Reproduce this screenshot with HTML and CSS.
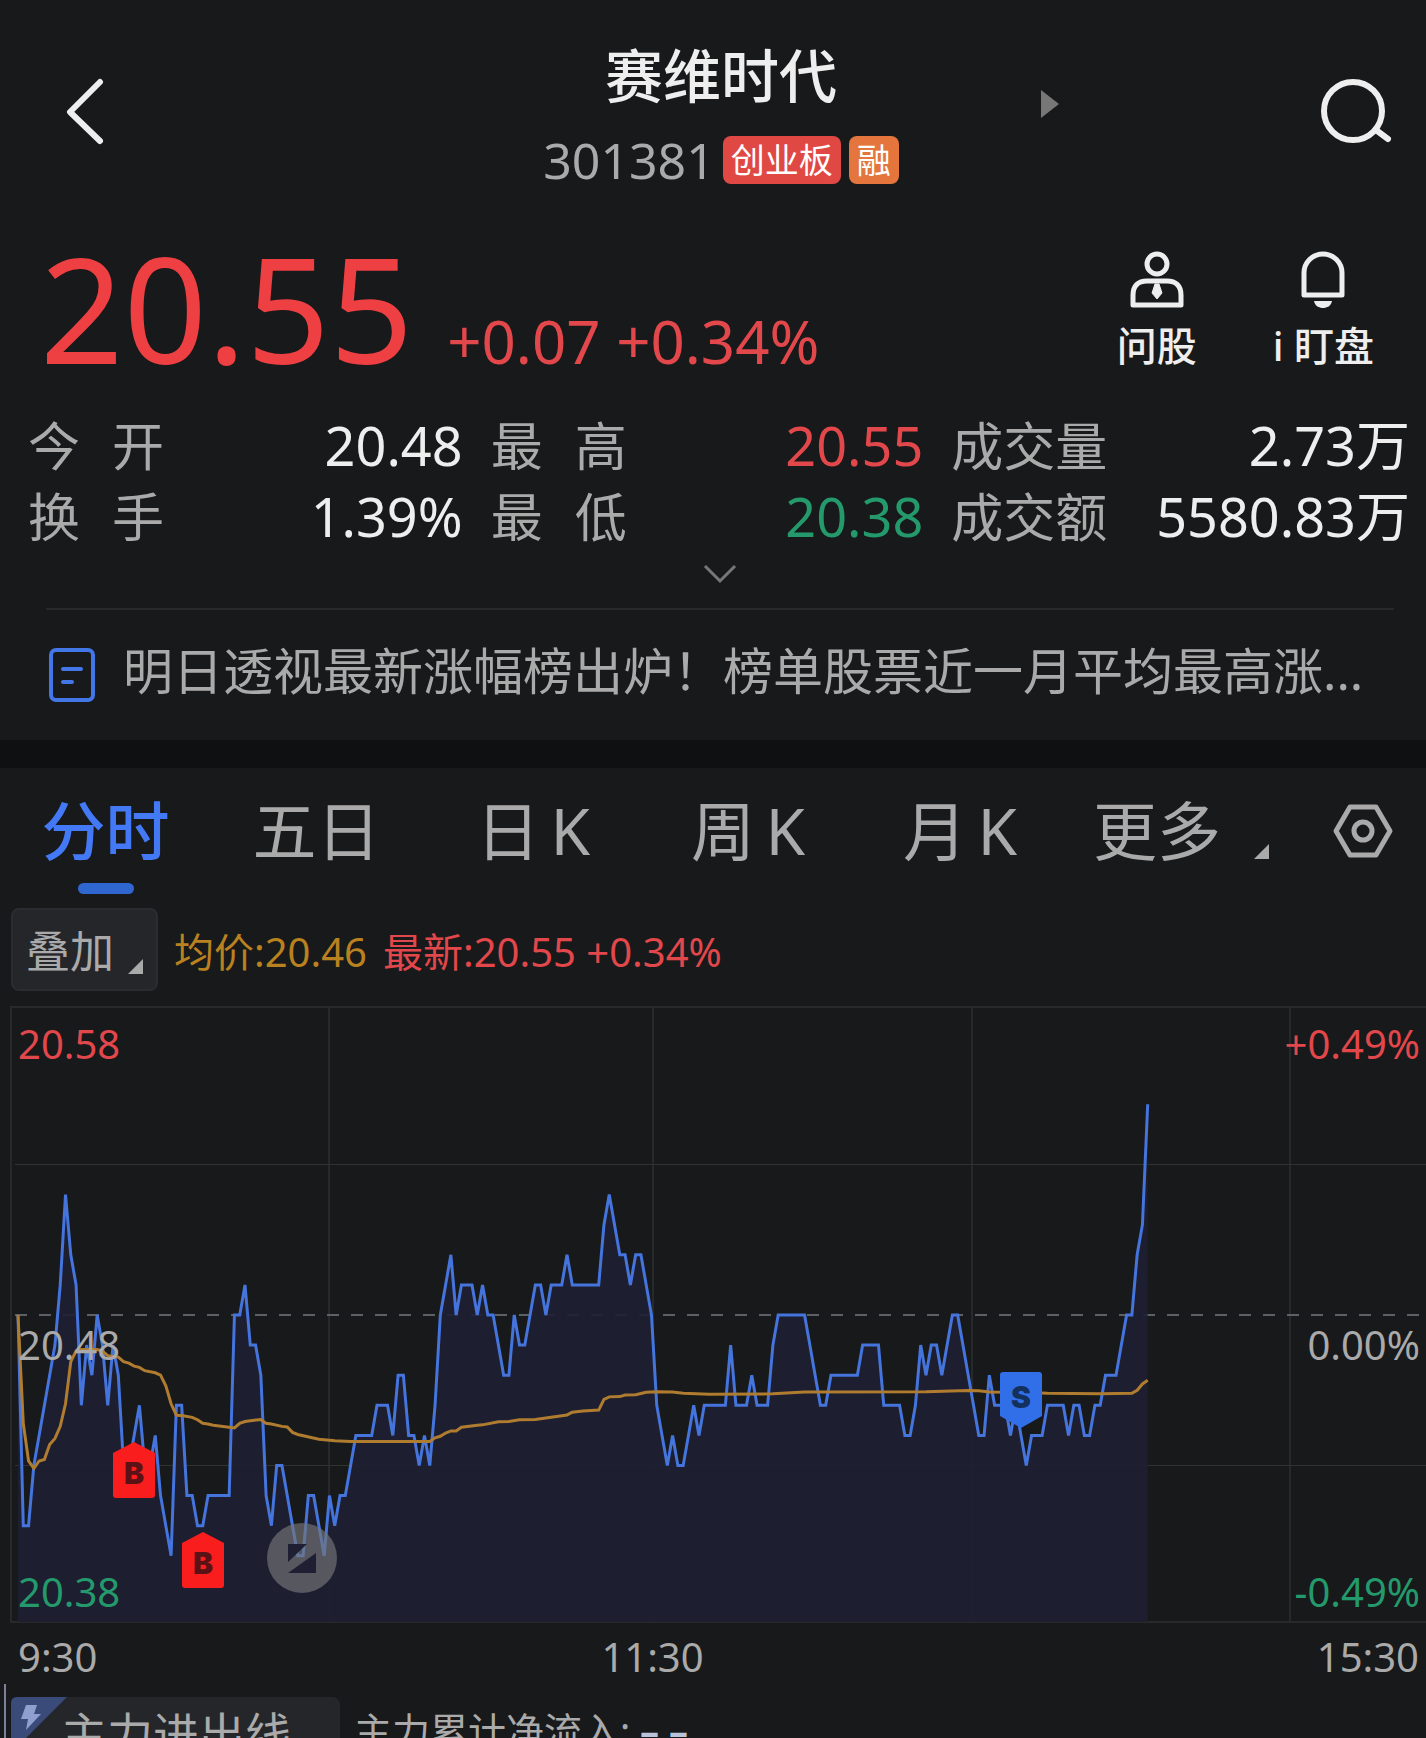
FILE: index.html
```html
<!DOCTYPE html>
<html lang="zh-CN">
<head>
<meta charset="utf-8">
<meta name="viewport" content="width=device-width, initial-scale=1">
<title>赛维时代 301381</title>
<link rel="stylesheet" href="styles.css">
</head>
<body>
<main class="app">
  <header class="header">
    <button class="icon-btn back" type="button" aria-label="返回">
      <svg width="40" height="70" viewBox="0 0 40 70" fill="none" stroke="#eee" stroke-width="6" stroke-linecap="round" stroke-linejoin="round"><path d="M34 5 4 35l30 29"/></svg>
    </button>
    <div class="stock">
      <h1 class="stock-name">赛维时代</h1>
      <div class="stock-meta">
        <span class="stock-code">301381</span>
        <span class="tag tag-red">创业板</span>
        <span class="tag tag-orange">融</span>
      </div>
    </div>
    <div class="header-right">
      <button class="icon-btn next" type="button" aria-label="下一只">
        <svg width="18" height="28" viewBox="0 0 18 28" fill="#777"><path d="M0 0 18 14 0 28z"/></svg>
      </button>
      <button class="icon-btn search" type="button" aria-label="搜索">
        <svg width="72" height="66" viewBox="0 0 72 66" fill="none" stroke="#eee" stroke-width="6" stroke-linecap="round"><circle cx="33" cy="32" r="29"/><path d="m56 51 12 9"/></svg>
      </button>
    </div>
  </header>

  <section class="quote">
    <div class="price">20.55</div>
    <div class="change">+0.07 +0.34%</div>
    <div class="actions">
      <button class="action" type="button">
        <svg width="54" height="58" viewBox="0 0 54 58" fill="none" stroke="#eee" stroke-width="5" stroke-linejoin="round"><circle cx="27" cy="13" r="10"/><path d="M3 54V44c0-9 5-14 14-14h20c9 0 14 5 14 14v10z"/><path d="M25 33h4l3 9-5 6-5-6z" fill="#eee" stroke-width="1"/></svg>
        <span>问股</span>
      </button>
      <button class="action" type="button">
        <svg width="54" height="58" viewBox="0 0 54 58" fill="none" stroke="#eee" stroke-width="5" stroke-linejoin="round"><path d="M8 44V22a19 19 0 0 1 38 0v22z"/><path d="M18 50h18c-1 5-5 7-9 7s-8-2-9-7z" fill="#eee" stroke="none"/></svg>
        <span>i 盯盘</span>
      </button>
    </div>
  </section>

  <dl class="stats">
    <div class="stat"><dt>今 开</dt><dd>20.48</dd></div>
    <div class="stat"><dt>最 高</dt><dd class="up">20.55</dd></div>
    <div class="stat"><dt>成交量</dt><dd>2.73万</dd></div>
    <div class="stat"><dt>换 手</dt><dd>1.39%</dd></div>
    <div class="stat"><dt>最 低</dt><dd class="down">20.38</dd></div>
    <div class="stat"><dt>成交额</dt><dd>5580.83万</dd></div>
  </dl>
  <button class="icon-btn expand" type="button" aria-label="展开">
    <svg width="34" height="20" viewBox="0 0 34 20" fill="none" stroke="#777" stroke-width="3"><path d="m2 2 15 15L32 2"/></svg>
  </button>

  <a class="news" href="#news">
    <svg class="news-icon" width="46" height="54" viewBox="0 0 46 54" fill="none" stroke="#4377e8" stroke-width="4" stroke-linecap="round"><rect x="2" y="2" width="42" height="50" rx="5"/><path d="M14 21h18M14 34h9"/></svg>
    <span class="news-text">明日透视最新涨幅榜出炉！榜单股票近一月平均最高涨...</span>
  </a>

  <nav class="tabs">
    <button class="tab active" type="button">分时</button>
    <button class="tab" type="button">五日</button>
    <button class="tab" type="button">日&#8201;K</button>
    <button class="tab" type="button">周&#8201;K</button>
    <button class="tab" type="button">月&#8201;K</button>
    <button class="tab more" type="button">更多<svg class="corner" width="16" height="16" viewBox="0 0 16 16"><path d="M15 0v15H0z"/></svg></button>
    <button class="tab settings" type="button" aria-label="设置">
      <svg width="60" height="54" viewBox="0 0 60 54" fill="none" stroke="#aaa" stroke-width="5" stroke-linejoin="round"><path d="M17 3h26l14 24-14 24H17L3 27z"/><circle cx="30" cy="27" r="9"/></svg>
    </button>
  </nav>

  <div class="legend">
    <button class="overlay-btn" type="button">叠加<svg class="corner" width="16" height="16" viewBox="0 0 16 16"><path d="M15 0v15H0z"/></svg></button>
    <span class="avg">均价:20.46</span>
    <span class="last">最新:20.55 +0.34%</span>
  </div>

  <section class="chart">
    <svg class="plot" viewBox="0 0 1416 618" preserveAspectRatio="none">
      <g class="frame"><path d="M1416 1H1v615h1415M319 1v615M643 1v615M962 1v615M1280 1v615"/></g>
      <path class="grid-line" d="M5 158.500h1411M5 459.500h1411"/>
      <path class="zero-line" d="M5 309h1411"/>
      <!-- x: minutes since 9:30, y: ticks from the previous close -->
      <g transform="translate(8 309) scale(5.279 -30.1)">
        <polygon class="area" id="area"/>
        <polyline class="price-line" id="price-line" points="0,0 1,-7 2,-7 3,-5 4,-4 5,-3 6,-2 7,-1 8,1 9,4 10,2 11,1 12,-3 13,-1 14,-2 15,0 16,-1 17,-3 18,-1 19,-2 20,-5 21,-5 22,-4 23,-3 24,-5 25,-5 26,-4 27,-6 28,-7 29,-8 30,-3 31,-3 32,-6 33,-6 34,-7 35,-7 36,-6 40,-6 41,0 42,0 43,1 44,-1 45,-1 46,-2 47,-6 48,-7 49,-5 50,-5 51,-6 52,-7 53,-8 54,-8 55,-6 56,-6 57,-7 58,-8 59,-6 60,-7 61,-6 62,-6 63,-5 64,-4 67,-4 68,-3 70,-3 71,-4 72,-2 73,-2 74,-4 75,-4 76,-5 77,-4 78,-5 79,-3 80,0 81,1 82,2 83,0 84,1 86,1 87,0 88,1 89,0 90,0 91,-1 92,-2 93,-2 94,0 95,-1 96,-1 97,0 98,1 99,1 100,0 101,1 103,1 104,2 105,1 110,1 111,3 112,4 113,3 114,2 115,2 116,1 117,2 118,2 119,1 120,0 121,-3 122,-4 123,-5 124,-4 125,-5 126,-5 127,-4 128,-3 129,-4 130,-3 134,-3 135,-1 136,-3 138,-3 139,-2 140,-3 142,-3 143,-1 144,0 149,0 150,-1 151,-2 152,-3 153,-3 154,-2 159,-2 160,-1 163,-1 164,-3 167,-3 168,-4 169,-4 170,-3 171,-1 172,-2 173,-1 174,-1 175,-2 176,-1 177,0 178,0 179,-1 180,-2 181,-3 182,-4 183,-4 184,-2 185,-3 187,-3 188,-4 189,-3 190,-4 191,-5 192,-4 194,-4 195,-3 198,-3 199,-4 200,-3 201,-3 202,-4 203,-4 204,-3 205,-3 206,-2 208,-2 209,-1 210,0 211,0 212,2 213,3 214,7"/>
        <polyline class="avg-line" points="0,0 1,-3.6 2,-4.85 3,-5.1 4,-4.85 5,-4.8 6,-4.3 7,-4.1 8,-3.7 9,-2.95 10,-1.55 11,-1.2 12,-1.15 15,-1.15 16,-1.2 17,-1.35 19,-1.4 20,-1.55 21,-1.6 22,-1.7 23,-1.74 24,-1.85 26,-1.92 27,-2 28,-2.35 29,-2.95 30,-3.33 31,-3.34 33,-3.4 34,-3.48 35,-3.6 36,-3.62 37,-3.66 41,-3.75 42,-3.6 43,-3.54 46,-3.47 47,-3.6 48,-3.62 50,-3.7 51,-3.72 52,-3.9 53,-3.97 57,-4.13 60,-4.18 63,-4.2 78,-4.2 79,-4.08 80,-4.03 81,-3.92 82,-3.85 83,-3.85 84,-3.73 87,-3.66 88,-3.65 91,-3.55 93,-3.54 95,-3.48 98,-3.47 101,-3.4 104,-3.32 105,-3.23 107,-3.19 110,-3.16 111,-2.8 112,-2.72 114,-2.71 115,-2.66 117,-2.65 119,-2.57 121,-2.55 124,-2.56 126,-2.6 131,-2.63 143,-2.62 149,-2.56 172,-2.55 180,-2.51 182,-2.52 184,-2.56 190,-2.57 195,-2.6 205,-2.62 211,-2.6 212,-2.5 213,-2.29 214,-2.17"/>
      </g>
      <g class="markers">
        <path fill="#f91d1d" d="M103 447l21-11 21 11v42q0 3-3 3h-36q-3 0-3-3z"/><text x="124" y="478" fill="#5a1216">B</text>
        <path fill="#f91d1d" d="M172 537l21-11 21 11v42q0 3-3 3h-36q-3 0-3-3z"/><text x="193" y="568" fill="#5a1216">B</text>
        <path fill="#316fe8" d="M990 369q0-3 3-3h36q3 0 3 3v41l-21 12-21-12z"/><text x="1011" y="402" fill="#14305f">S</text>
      </g>
      <g class="zoomer"><circle cx="292" cy="552" r="35"/><path d="M278 538h19l-19 18zM306 567h-28l28-20z"/></g>
    </svg>
    <span class="label top up">20.58</span>
    <span class="label mid">20.48</span>
    <span class="label bottom down">20.38</span>
    <span class="label right top up">+0.49%</span>
    <span class="label right mid">0.00%</span>
    <span class="label right bottom down">-0.49%</span>
  </section>
  <div class="times"><span>9:30</span><span>11:30</span><span>15:30</span></div>

  <section class="flow">
    <button class="flow-btn" type="button">
      <svg class="flow-badge" width="58" height="58" viewBox="0 0 58 58"><path fill="#3a4b79" d="M0 6q0-6 6-6h50L0 56z"/><path fill="#8fa0d0" d="M15 8h11l-3 9h7L15 33l2-11h-7z"/></svg>
      主力进出线
    </button>
    <span class="flow-text">主力累计净流入: <b>– –</b></span>
  </section>
</main>
<script>
  // Close the price line down to the bottom of the plot to get the shaded area.
  const line = document.getElementById("price-line").getAttribute("points");
  document.getElementById("area").setAttribute("points", "0,-10.2 " + line + " 214,-10.2");
</script>
</body>
</html>
```

FILE: styles.css
```css
* { box-sizing: border-box; }

body {
  margin: 0;
  background: #17191a;
  color: #aaa;
  font-family: "Noto Sans", "Noto Sans CJK SC", sans-serif;
}

button {
  border: 0;
  padding: 0;
  background: none;
  color: inherit;
  font: inherit;
}

svg { display: block; }

.app {
  display: flex;
  flex-direction: column;
  height: 100vh;
  overflow: hidden;
}

.app > * { flex-shrink: 0; }

.up { color: #e2474b; }
.down { color: #249a6c; }

/* Header */
.header {
  display: grid;
  grid-template-columns: 1fr auto 1fr;
  align-items: center;
  height: 224px;
  padding: 0 34px 0 50px;
}

.back {
  justify-self: start;
  padding-left: 16px;
}

.header-right {
  display: flex;
  justify-content: space-between;
  align-items: center;
  padding-left: 142px;
}

.next { padding-bottom: 16px; }

.stock {
  display: flex;
  flex-direction: column;
  align-items: center;
  padding-top: 12px;
}

.stock-name {
  margin: 0;
  color: #eee;
  font-size: 58px;
  font-weight: 500;
  line-height: 84px;
}

.stock-meta {
  display: flex;
  align-items: center;
  gap: 8px;
  height: 84px;
}

.stock-code { font-size: 50px; }

.tag {
  height: 48px;
  padding: 0 8px;
  border-radius: 8px;
  color: #fff;
  font-size: 34px;
  line-height: 48px;
}

.tag-red { background: #e04844; }
.tag-orange { background: #e4763d; }

/* Quote */
.quote {
  display: flex;
  align-items: baseline;
  height: 176px;
  padding: 0 52px 0 40px;
}

.price {
  color: #ee3f43;
  font-size: 146px;
  line-height: 168px;
}

.change {
  margin-left: 34px;
  color: #e2474b;
  font-size: 60px;
  line-height: 92px;
}

.actions {
  display: flex;
  align-self: flex-start;
  gap: 76px;
  margin-left: auto;
  padding-top: 27px;
}

.action {
  display: flex;
  flex-direction: column;
  align-items: center;
  gap: 8px;
  color: #eee;
  font-size: 40px;
  font-weight: 500;
  line-height: 58px;
}

/* Figures */
.stats {
  display: grid;
  grid-template-columns: 434fr 432fr 458fr;
  column-gap: 28px;
  margin: 0;
  padding: 10px 16px 0 28px;
}

.stat {
  display: flex;
  justify-content: space-between;
  height: 71px;
  font-size: 52px;
  line-height: 71px;
  white-space: nowrap;
}

.stat dt {
  min-width: 136px;
  text-align-last: justify;
}

.stat dd {
  margin: 0;
  font-size: 54px;
}

.stat dd:not(.up):not(.down) { color: #eee; }

.expand {
  align-self: center;
  padding: 12px 0 0 14px;
}

/* News */
.news {
  display: flex;
  align-items: center;
  gap: 28px;
  margin: 24px 32px 0 46px;
  padding: 0 0 0 3px;
  height: 132px;
  border-top: 2px solid #26282a;
  color: #aaa;
  text-decoration: none;
}

.news-icon { flex: none; }

.news-text {
  padding-bottom: 8px;
  font-size: 50px;
  line-height: 72px;
  white-space: nowrap;
}

/* Tabs */
.tabs {
  display: grid;
  grid-template-columns: 211fr 211fr 222fr 208fr 216fr 198fr 160fr;
  height: 140px;
  border-top: 28px solid #0f1011;
  box-sizing: content-box;
}

.tab {
  position: relative;
  display: flex;
  justify-content: center;
  align-items: center;
  padding-bottom: 22px;
  font-size: 64px;
  white-space: nowrap;
}

.tab.active {
  color: #4479f5;
  font-weight: 500;
}

.tab.active::after {
  content: "";
  position: absolute;
  bottom: 14px;
  width: 56px;
  height: 11px;
  border-radius: 6px;
  background: #3066d0;
}

.tab.more { padding-right: 20px; }

.tab.settings {
  justify-content: flex-end;
  padding: 0 33px 14px 0;
}

.corner { fill: #aaa; }

.more .corner {
  position: absolute;
  right: -4px;
  bottom: 48px;
}

/* Legend */
.legend {
  display: flex;
  align-items: center;
  height: 83px;
  padding-left: 11px;
  font-size: 40px;
}

.overlay-btn {
  display: flex;
  align-items: center;
  gap: 14px;
  height: 83px;
  margin-right: 16px;
  padding: 0 12px 2px 13px;
  border: 2px solid #2a2c2f;
  border-radius: 8px;
  background: #25262a;
  font-size: 44px;
}

.overlay-btn .corner {
  align-self: flex-end;
  margin-bottom: 12px;
}

.avg {
  margin-right: 16px;
  color: #b9811f;
}

.last { color: #e2474b; }

/* Chart */
.chart {
  position: relative;
  margin: 15px 0 0 10px;
}

.plot {
  width: 100%;
  height: 618px;
}

.plot path,
.plot polyline { vector-effect: non-scaling-stroke; }

.frame { fill: none; stroke: #27292b; stroke-width: 2; }
.grid-line { fill: none; stroke: #303332; }
.zero-line { stroke: #5c6067; stroke-width: 2; stroke-dasharray: 12 12; }
.area { fill: #1e1f33; fill-opacity: .9; }
.price-line { fill: none; stroke: #4474dc; stroke-width: 3; }
.avg-line { fill: none; stroke: #b07c30; stroke-width: 3; }

.markers {
  font: 900 30px Inter, sans-serif;
  text-anchor: middle;
}

.zoomer circle { fill: #77777a; fill-opacity: .65; }
.zoomer path { fill: #1e1f33; }

.label {
  position: absolute;
  left: 8px;
  font-size: 40px;
  line-height: 48px;
}

.label.right { right: 6px; left: auto; }
.label.top { top: 14px; }
.label.mid { top: 315px; }
.label.bottom { bottom: 8px; }

.times {
  display: grid;
  grid-template-columns: 1fr auto 1fr;
  padding: 7px 7px 1px 18px;
  font-size: 40px;
  line-height: 52px;
}

.times span:nth-child(2) { margin-right: 132px; }
.times span:last-child { text-align: right; }

/* Capital flow */
.flow {
  display: flex;
  gap: 14px;
  margin: 0 0 0 4px;
  padding: 13px 0 0 5px;
  border-left: 2px solid #7c8098;
}

.flow-btn {
  position: relative;
  width: 329px;
  height: 83px;
  padding: 0 0 16px 50px;
  border-radius: 8px;
  background: #25262a;
  font-size: 46px;
  text-align: left;
}

.flow-badge {
  position: absolute;
  top: 0;
  left: 0;
}

.flow-text {
  font-size: 38px;
  line-height: 66px;
}

.flow-text b { color: #b9c4da; }
```
